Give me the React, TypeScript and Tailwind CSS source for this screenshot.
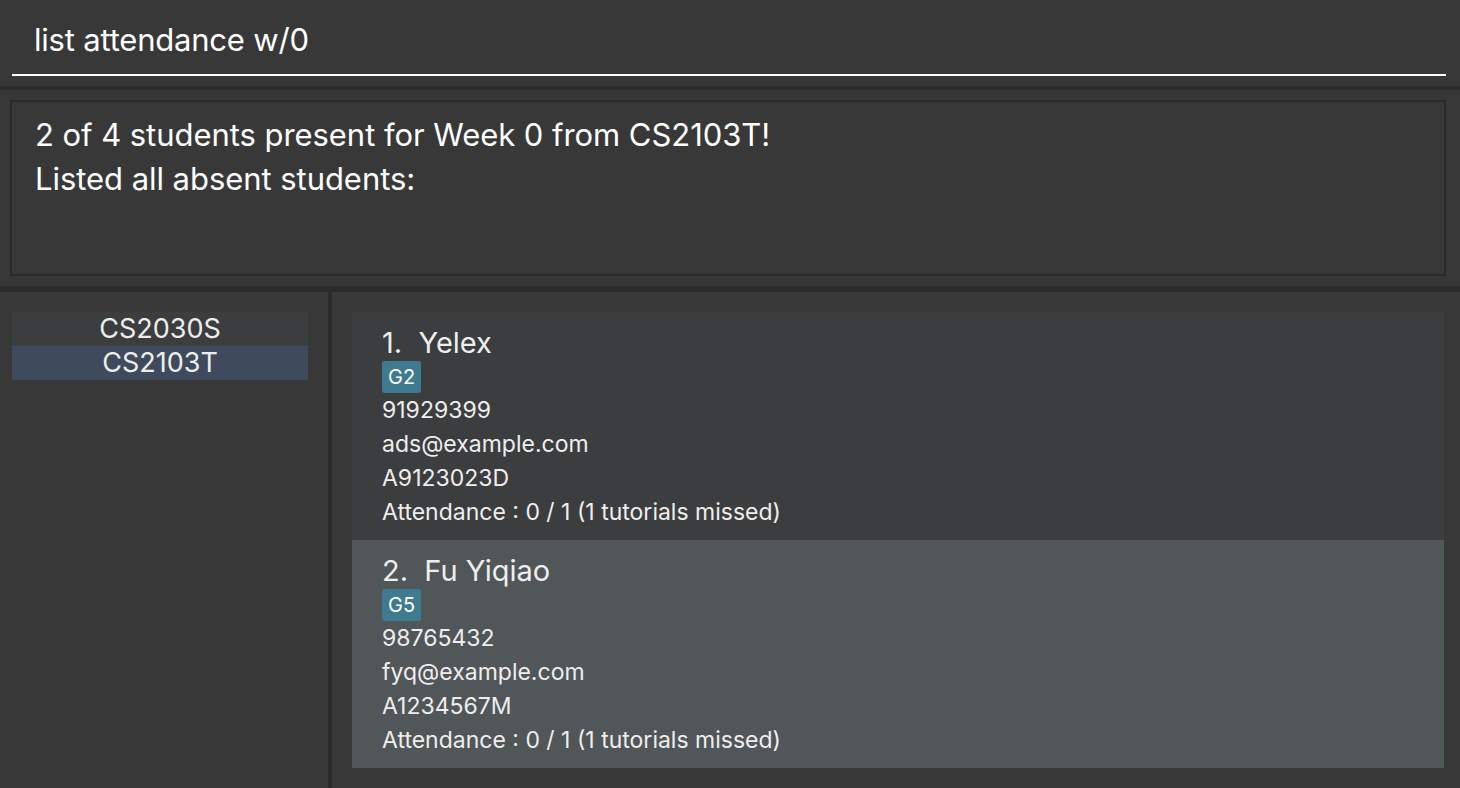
import React from "react";

const students = [
  { n: 1, name: "Yelex", tag: "G2", phone: "91929399", email: "ads@example.com", id: "A9123023D", bg: "bg-[#3c3d3f]" },
  { n: 2, name: "Fu Yiqiao", tag: "G5", phone: "98765432", email: "fyq@example.com", id: "A1234567M", bg: "bg-[#515658]" },
];

export default function App() {
  return (
    <div
      className="w-[1460px] h-[788px] bg-[#383838] flex flex-col overflow-hidden text-white"
      style={{ fontFamily: "Inter, 'Noto Sans', sans-serif" }}
    >
      {/* command box */}
      <div className="h-[86px] pl-[12px] pr-[14px] pt-[20px] shrink-0">
        <div className="h-[56px] border-b-2 border-white pl-[22px] text-[31px] leading-[40px] tracking-[-0.2px]">
          list attendance w/0
        </div>
      </div>
      <div className="h-[4px] bg-[#2b2b2b] shrink-0" />
      {/* result */}
      <div className="h-[196px] pl-[10px] pr-[14px] py-[10px] shrink-0">
        <div className="h-[176px] border-2 border-[#2b2b2b] pl-[23px] pt-[11px] text-[31px] leading-[44px] tracking-[-0.05px]">
          <div>2 of 4 students present for Week 0 from CS2103T!</div>
          <div>Listed all absent students:</div>
        </div>
      </div>
      <div className="h-[6px] bg-[#2b2b2b] shrink-0" />
      {/* bottom */}
      <div className="flex flex-1 min-h-0">
        <div className="w-[328px] pl-[12px] pr-[20px] pt-[20px] shrink-0">
          <div className="h-[34px] bg-[#3c3d3f] flex items-center justify-center text-[27px] text-[#eeeeee]">CS2030S</div>
          <div className="h-[34px] bg-[#3f4b5c] flex items-center justify-center text-[27px] text-[#eeeeee]">CS2103T</div>
        </div>
        <div className="w-[4px] bg-[#2b2b2b] shrink-0" />
        <div className="flex-1 pl-[20px] pr-[16px] pt-[20px] flex flex-col">
          {students.map((s) => (
            <div key={s.n} className={`${s.bg} h-[228px] pl-[30px] pt-[13px] text-[#eeeeee]`}>
              <div className="text-[29px] leading-[36px]">
                {s.n}.&nbsp;&nbsp;{s.name}
              </div>
              <div className="flex">
                <span className="bg-[#3e7b91] rounded-[3px] h-[32px] px-[6px] text-[20px] leading-[32px] text-white">
                  {s.tag}
                </span>
              </div>
              <div className="text-[23px] leading-[34px]">
                <div>{s.phone}</div>
                <div>{s.email}</div>
                <div>{s.id}</div>
                <div>Attendance : 0 / 1 (1 tutorials missed)</div>
              </div>
            </div>
          ))}
        </div>
      </div>
    </div>
  );
}
